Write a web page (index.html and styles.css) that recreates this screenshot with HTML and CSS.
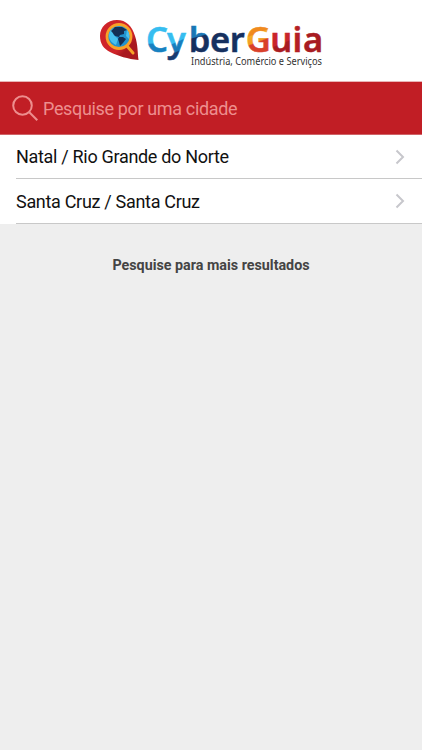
FILE: index.html
```html
<!DOCTYPE html>
<html lang="pt-BR">
<head>
    <meta charset="UTF-8">
    <meta name="viewport" content="width=device-width, initial-scale=1.0">
    <title>CyberGuia</title>
    <link rel="stylesheet" href="styles.css">
</head>
<body>
    <header class="header">
        <svg class="logo" viewBox="0 -14 230 72" role="img" aria-label="CyberGuia">
            <defs>
                <linearGradient id="pin" x1="0" y1="0" x2="1" y2="1">
                    <stop offset="0.6" stop-color="#cf2429"/>
                    <stop offset="0.72" stop-color="#a9191f"/>
                </linearGradient>
                <linearGradient id="cyan" gradientUnits="userSpaceOnUse" x1="56" y1="9" x2="58" y2="35">
                    <stop offset="0.6" stop-color="#36bdf0"/>
                    <stop offset="0.66" stop-color="#1781c1"/>
                </linearGradient>
                <linearGradient id="blue" gradientUnits="userSpaceOnUse" x1="70" y1="15" x2="82" y2="42">
                    <stop offset="0.38" stop-color="#36bdf0"/>
                    <stop offset="0.42" stop-color="#1781c1"/>
                    <stop offset="0.68" stop-color="#1976b5"/>
                    <stop offset="0.72" stop-color="#173a70"/>
                </linearGradient>
                <linearGradient id="navy" gradientUnits="userSpaceOnUse" x1="94" y1="8" x2="101" y2="34">
                    <stop offset="0.42" stop-color="#1976b5"/>
                    <stop offset="0.46" stop-color="#15305f"/>
                </linearGradient>
                <linearGradient id="orange" gradientUnits="userSpaceOnUse" x1="154" y1="9" x2="164" y2="35">
                    <stop offset="0.26" stop-color="#f08a1f"/>
                    <stop offset="0.3" stop-color="#f5ad25"/>
                    <stop offset="0.55" stop-color="#f19a24"/>
                    <stop offset="0.6" stop-color="#d9402a"/>
                </linearGradient>
                <linearGradient id="red" gradientUnits="userSpaceOnUse" x1="176" y1="14" x2="184" y2="34">
                    <stop offset="0.6" stop-color="#c9252b"/>
                    <stop offset="0.66" stop-color="#a81c22"/>
                </linearGradient>
            </defs>

            <!-- pin with the magnifier -->
            <path fill="url(#pin)" d="M19 2C9 2 2 9 2 18c0 8 4 13 10 16 8 4 18 7 28.500 8-1-8-.5-15-3.500-24C34 8 28 2 19 2z"/>
            <path stroke="#f8a128" stroke-width="3" stroke-linecap="round" d="M29 28l6 7"/>
            <circle cx="21" cy="18.500" r="12" fill="#2292ce" stroke="#f8a128" stroke-width="2.8"/>
            <path fill="#49c1ef" d="M11 17c0-3 2-6 5-7l-1 6 5 5-2 6c-4-2-7-5-7-10zM29 12c2 2 3 5 2 9l-3-3z"/>
            <path fill="#142f55" d="M13 13l4-4h7l5 3-3 1v3l-4 1-1 2-4-1-3-4zM21 19l4 0 3 2-3 4-3 3-1-4-1-3z"/>

            <!-- one tspan per letter, each with its own colours -->
            <text class="wordmark" y="34.2"><tspan x="48" fill="url(#cyan)" stroke="url(#cyan)">C</tspan><tspan x="69" fill="url(#blue)" stroke="url(#blue)">y</tspan><tspan x="90.7" fill="url(#navy)" stroke="url(#navy)">b</tspan><tspan x="112" fill="#15305f" stroke="#15305f">e</tspan><tspan x="131.7" fill="#15305f" stroke="#15305f">r</tspan><tspan x="147.8" fill="url(#orange)" stroke="url(#orange)">G</tspan><tspan x="172.2" fill="url(#red)" stroke="url(#red)">u</tspan><tspan x="194.5" fill="#b51f25" stroke="#b51f25">i</tspan><tspan x="205" fill="#a81c22" stroke="#a81c22">a</tspan></text>
            <text class="tagline" x="93" y="46.500" textLength="131" lengthAdjust="spacingAndGlyphs">Indústria, Comércio e Serviços</text>
        </svg>
    </header>

    <div class="search">
        <svg class="search-icon" viewBox="0 0 28 28">
            <circle cx="10.5" cy="10.5" r="9.3"/>
            <path d="M17.3 17.3l8 8"/>
        </svg>
        <input class="search-input" type="text" placeholder="Pesquise por uma cidade">
    </div>

    <ul class="cities">
        <li class="city">
            <span>Natal / Rio Grande do Norte</span>
            <svg class="arrow" viewBox="0 0 10 16"><path d="M1.5 1.5L8 8l-6.5 6.5"/></svg>
        </li>
        <li class="city">
            <span>Santa Cruz / Santa Cruz</span>
            <svg class="arrow" viewBox="0 0 10 16"><path d="M1.5 1.5L8 8l-6.5 6.5"/></svg>
        </li>
    </ul>

    <p class="hint">Pesquise para mais resultados</p>
</body>
</html>
```

FILE: styles.css
```css
* {
    box-sizing: border-box;
}
body {
    margin: 0;
    min-height: 100vh;
    background: #eeeeee;
    font-family: Roboto, sans-serif;
    color: #111;
}
.header {
    height: 82px;
    padding: 4px 0 0 98px;
    background: #fff;
    border-bottom: 1px solid #e9b5b7;
}
.logo {
    display: block;
    width: 230px;
    height: 72px;
    fill: none;
}
.wordmark {
    font-family: "Noto Sans", sans-serif;
    font-size: 34.5px;
    font-weight: 600;
    stroke-width: 0.5px;
}
.tagline {
    font-family: "Noto Sans", sans-serif;
    font-size: 10px;
    fill: #333;
}
.search {
    display: flex;
    align-items: center;
    height: 53px;
    padding: 0 12px;
    background: #c11e25;
    border-bottom: 1px solid #cf6367;
}
.search-icon {
    width: 28px;
    height: 28px;
    margin-top: 2px;
    fill: none;
    stroke: #ed8e8e;
    stroke-width: 2;
}
.search-input {
    flex: 1;
    min-width: 0;
    margin-left: 3px;
    padding: 0;
    border: none;
    outline: none;
    background: none;
    font-family: inherit;
    font-size: 18px;
    letter-spacing: -0.35px;
    color: #fff;
}
.search-input::placeholder {
    color: #ed8e8e;
}
.cities {
    margin: 0;
    padding: 0;
    list-style: none;
    background: #fff;
}
.city {
    display: flex;
    justify-content: space-between;
    align-items: center;
    height: 45px;
    margin-left: 16px;
    padding: 0 17px 0 0;
    border-bottom: 1px solid #c8c8c8;
    font-size: 18px;
    letter-spacing: -0.31px;
}
.city:first-child {
    height: 44px;
}
.arrow {
    width: 10px;
    height: 16px;
    fill: none;
    stroke: #c7c7cc;
    stroke-width: 2;
}
.hint {
    margin: 32px 0 0;
    font-size: 14.3px;
    font-weight: 700;
    line-height: 18px;
    text-align: center;
    color: #444;
}
```
